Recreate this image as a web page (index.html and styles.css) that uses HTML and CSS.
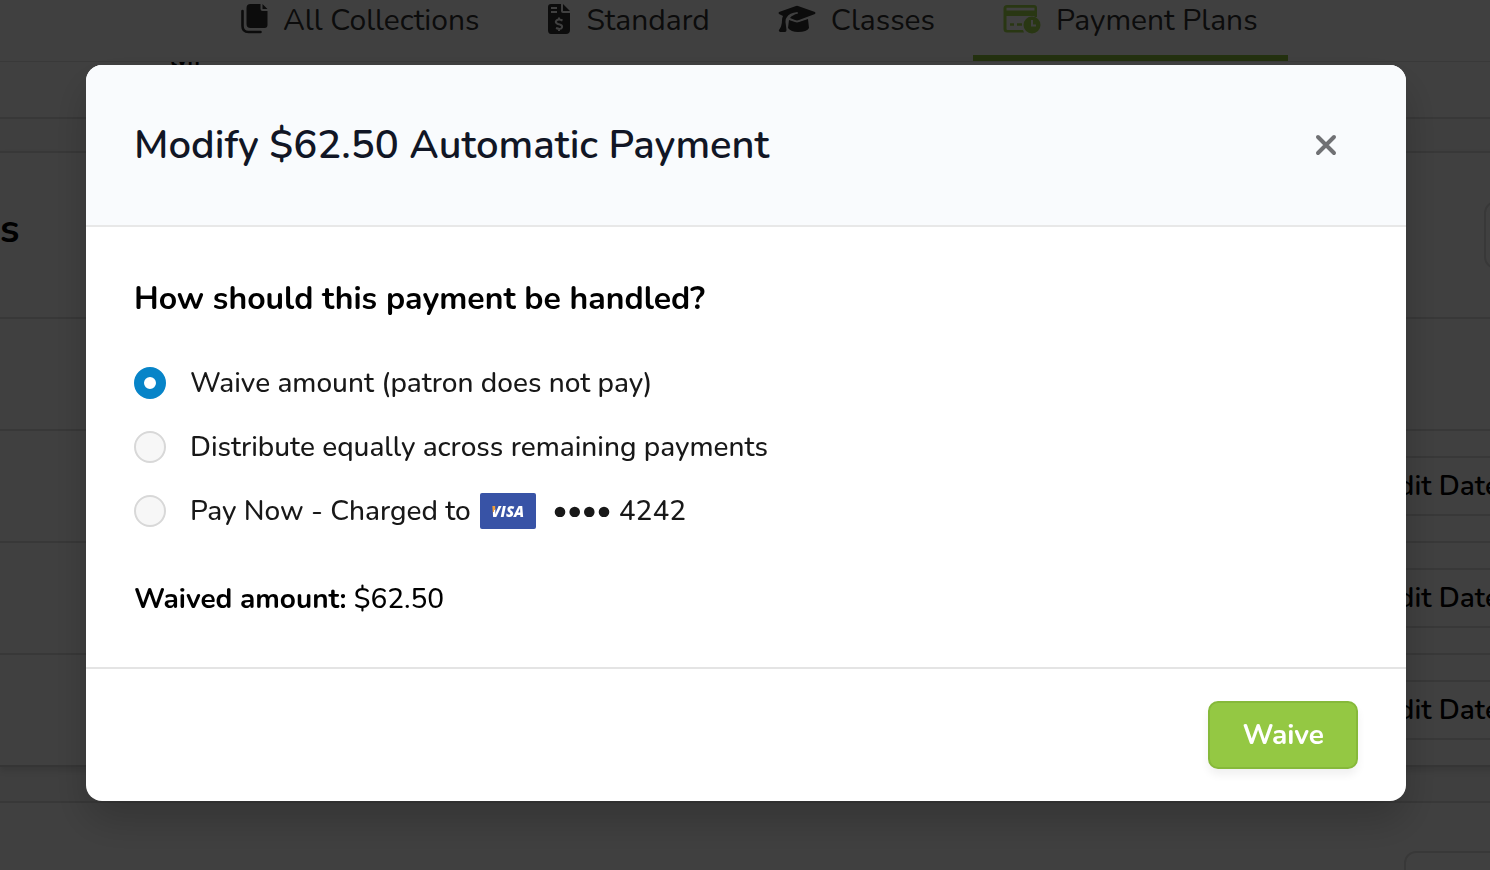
FILE: index.html
```
<!DOCTYPE html>
<html lang="en">
<head>
<meta charset="utf-8">
<title>Payment Plans</title>
<link rel="stylesheet" href="styles.css">
</head>
<body>
<div class="page">
  <nav class="tabs">
    <a class="tab" href="#">
      <svg width="27" height="32" viewBox="0.5 0 27 32" fill="currentColor"><path d="M10 1h10v5q0 2 2 2h5v14q0 3-3 3H10q-4 0-4-4V5q0-4 4-4zM22 1l5 5h-5z"/><path d="M2 8v15q0 6 6 6h12" fill="none" stroke="currentColor" stroke-width="2.6" stroke-linecap="round"/></svg>
      <span>All Collections</span>
    </a>
    <a class="tab" href="#">
      <svg width="24" height="32" viewBox="0 0 24 32"><path fill="currentColor" d="M4 1h10v7q0 2 2 2h7v17q0 4-4 4H4q-3 0-3-4V4q0-3 3-3zM16 1l7 7h-7z"/><path class="cut" d="M4 5h6M4 9h6M15.500 17.500q-4-2-6 0t1.500 3.500q5 1 4 3.500t-6 .5M12 14.500v2M12 26v2"/></svg>
      <span>Standard</span>
    </a>
    <a class="tab" href="#">
      <svg width="38" height="32" viewBox="0 0 38 32" fill="currentColor"><path d="M1 9 18 3q1-.4 2 0l17 6q1 1 0 2L21 17q-2 .8-4 0l-5-2q2-3 8-4.500l-.5-1.500Q11 10 9 14q-2 2-1.500 5l1 8q0 2-1.500 2H2q-2-1-1-2 3-4 3-10 0-2 1-4L1 11q-1-1 0-2z"/><path d="m11 17 6 2q2 .8 4 0l9-3 1 9q-2 4-11 4-7 0-10-4z"/></svg>
      <span>Classes</span>
    </a>
    <a class="tab tab-active" href="#" aria-current="page">
      <svg width="38" height="32" viewBox="0 0 38 32"><path fill="currentColor" fill-rule="evenodd" d="M4 2h27q3 0 3 3v9h-2.500v-1H3.500v13q0 1 1 1H20l1 2.500H4q-3.500 0-3.500-3.500V5.500Q.5 2 4 2zM3.500 4.800v2.600h28V4.800z"/><path d="M7 21.500h4M14 21.500h5" fill="none" stroke="currentColor" stroke-width="2.400"/><circle cx="29" cy="22" r="8.500" fill="currentColor"/><path class="cut" d="M29 17v5.500h4"/></svg>
      <span>Payment Plans</span>
    </a>
  </nav>
  <div class="strip"><span class="strip-name">lyn</span></div>
  <main class="card">
    <header class="card-head"><h1>s</h1><button class="ghost-button wide" type="button" aria-label="Options"></button></header>
    <div class="row"></div>
    <div class="row"><button class="ghost-button" type="button">Edit Date</button></div>
    <div class="row"><button class="ghost-button" type="button">Edit Date</button></div>
    <div class="row"><button class="ghost-button" type="button">Edit Date</button></div>
  </main>
  <section class="next-card"><button class="ghost-button medium" type="button" aria-label="More"></button></section>
</div>

<div class="overlay">
  <form class="modal" role="dialog" aria-modal="true" aria-labelledby="modal-title">
    <header class="modal-head">
      <h2 id="modal-title">Modify $62.50 Automatic Payment</h2>
      <button class="close" type="button" aria-label="Close"><svg width="24" height="24" viewBox="0 0 24 24"><path d="M4 4l16 16M20 4 4 20"/></svg></button>
    </header>
    <div class="modal-body">
      <fieldset class="options">
        <legend>How should this payment be handled?</legend>
        <label class="option"><input type="radio" name="handling" checked><span>Waive amount (patron does not pay)</span></label>
        <label class="option"><input type="radio" name="handling"><span>Distribute equally across remaining payments</span></label>
        <label class="option"><input type="radio" name="handling"><span class="pay-now">Pay Now - Charged to <span class="visa"><span class="visa-mark">VISA</span></span><svg class="dots" width="56" height="12" viewBox="0 0 56 12" fill="currentColor"><circle cx="6" cy="7" r="5.300"/><circle cx="20.700" cy="7" r="5.300"/><circle cx="35.300" cy="7" r="5.300"/><circle cx="50" cy="7" r="5.300"/></svg><span>4242</span></span></label>
      </fieldset>
      <p class="waived"><strong>Waived amount:</strong> $62.50</p>
    </div>
    <footer class="modal-foot"><button class="primary" type="submit">Waive</button></footer>
  </form>
</div>
</body>
</html>
```
FILE: styles.css
```
* { box-sizing: border-box; }
body {
  margin: 0;
  height: 100vh;
  overflow: hidden;
  background: #f9f9f9;
  color: #000;
  font-family: Nunito, Lato, sans-serif;
}
button { font: inherit; }

.page {
  display: flex;
  flex-direction: column;
  width: calc(100% + 70px);
  height: 100vh;
}
.tabs {
  display: flex;
  flex: none;
  gap: 8px;
  padding-left: 211px;
  background: #fff;
  border-bottom: 1px solid #e2e2e2;
}
.tab {
  display: flex;
  align-items: center;
  gap: 15px;
  padding: 0 30px 13px;
  border-bottom: 6px solid transparent;
  color: #303030;
  font-size: 30px;
  line-height: 42px;
  text-decoration: none;
}
.tab svg { flex: none; margin-bottom: 4px; }
.tab-active { border-color: #8cc33c; }
.tab-active svg { color: #a4da4c; }
.cut { fill: none; stroke: #fff; stroke-width: 2; }
.strip {
  display: flex;
  flex: none;
  height: 57px;
  overflow: hidden;
  padding-left: 170px;
  background: #fff;
  border-bottom: 2px solid #dedede;
}
.strip-name { margin-top: -19px; font-size: 21px; line-height: 32px; font-weight: 700; }
.card {
  flex: none;
  margin-top: 32px;
  background: #fff;
  border-top: 2px solid #dedede;
  border-bottom: 2px solid #d4d4d4;
  box-shadow: 0 4px 6px rgba(0, 0, 0, .1);
}
.card-head {
  display: flex;
  align-items: center;
  justify-content: space-between;
  height: 164px;
}
.card-head h1 { margin: 0; padding-bottom: 12px; font-size: 40px; line-height: 48px; font-weight: 700; }
.row {
  display: flex;
  align-items: center;
  justify-content: flex-end;
  height: 112px;
  padding-right: 34px;
  border-top: 2px solid #dedede;
}
.ghost-button {
  flex: none;
  height: 60px;
  padding: 0 24px;
  border: 2px solid #dedede;
  border-radius: 12px;
  background: #fff;
  color: #000;
  font-size: 28px;
  font-weight: 600;
}
.wide { width: 76px; height: 68px; border-radius: 12px 0 0 12px; }
.medium { width: 156px; }
.next-card {
  display: flex;
  flex: 1;
  justify-content: flex-end;
  margin-top: 34px;
  padding-top: 48px;
  min-height: 0;
  overflow: hidden;
  background: #fff;
  border-top: 2px solid #dedede;
}

.overlay {
  position: fixed;
  inset: 0;
  padding: 65px 84px 0 86px;
  background: rgba(0, 0, 0, .75);
}
.modal {
  overflow: hidden;
  border-radius: 16px;
  background: #fff;
  box-shadow: 0 20px 40px rgba(0, 0, 0, .2);
}
.modal-head {
  display: flex;
  align-items: center;
  justify-content: space-between;
  padding: 48px;
  background: #f9fbfd;
  border-bottom: 2px solid #e8e8e8;
}
.modal-head h2 { margin: 0; color: #111625; font-size: 40px; line-height: 64px; font-weight: 600; }
.close {
  display: flex;
  padding: 20px;
  border: 0;
  background: none;
}
.close path { fill: none; stroke: #707174; stroke-width: 4; stroke-linecap: round; }
.modal-body { padding: 48px 48px 44px; }
.options { margin: 0; padding: 0; border: 0; }
.options legend { padding: 0; margin-bottom: 32px; font-size: 32px; line-height: 48px; font-weight: 700; }
.option {
  display: flex;
  align-items: center;
  gap: 24px;
  margin-bottom: 8px;
  height: 56px;
  color: #181818;
  font-size: 28px;
  font-weight: 500;
  line-height: 40px;
}
.option input {
  appearance: none;
  flex: none;
  width: 32px;
  height: 32px;
  margin: 0;
  border: 2px solid #d8d8d8;
  border-radius: 50%;
  background: #f7f7f7;
}
.option input:checked { border: 10px solid #0784c8; background: #fff; }
.pay-now { display: flex; align-items: center; gap: 9px; }
.visa {
  width: 56px;
  border-radius: 2px;
  background: #3853a6;
  font-family: "Open Sans", sans-serif;
  font-size: 15px;
  font-style: italic;
  font-weight: 800;
  line-height: 36px;
  text-align: center;
}
.visa-mark {
  background: linear-gradient(120deg, #f0a03c 20%, #fff 20%);
  background-clip: text;
  color: transparent;
}
.dots { margin-left: 9px; }
.waived { margin: 28px 0 0; font-size: 28px; line-height: 48px; font-weight: 500; }
.modal-foot {
  display: flex;
  justify-content: flex-end;
  padding: 32px 48px;
  border-top: 2px solid #e4e4e4;
}
.primary {
  height: 68px;
  padding: 0 32px;
  border: 2px solid #86b93a;
  border-radius: 10px;
  background: #94c843;
  box-shadow: 0 6px 8px rgba(0, 0, 0, .06);
  color: #fff;
  font-size: 28px;
  font-weight: 700;
}
```
